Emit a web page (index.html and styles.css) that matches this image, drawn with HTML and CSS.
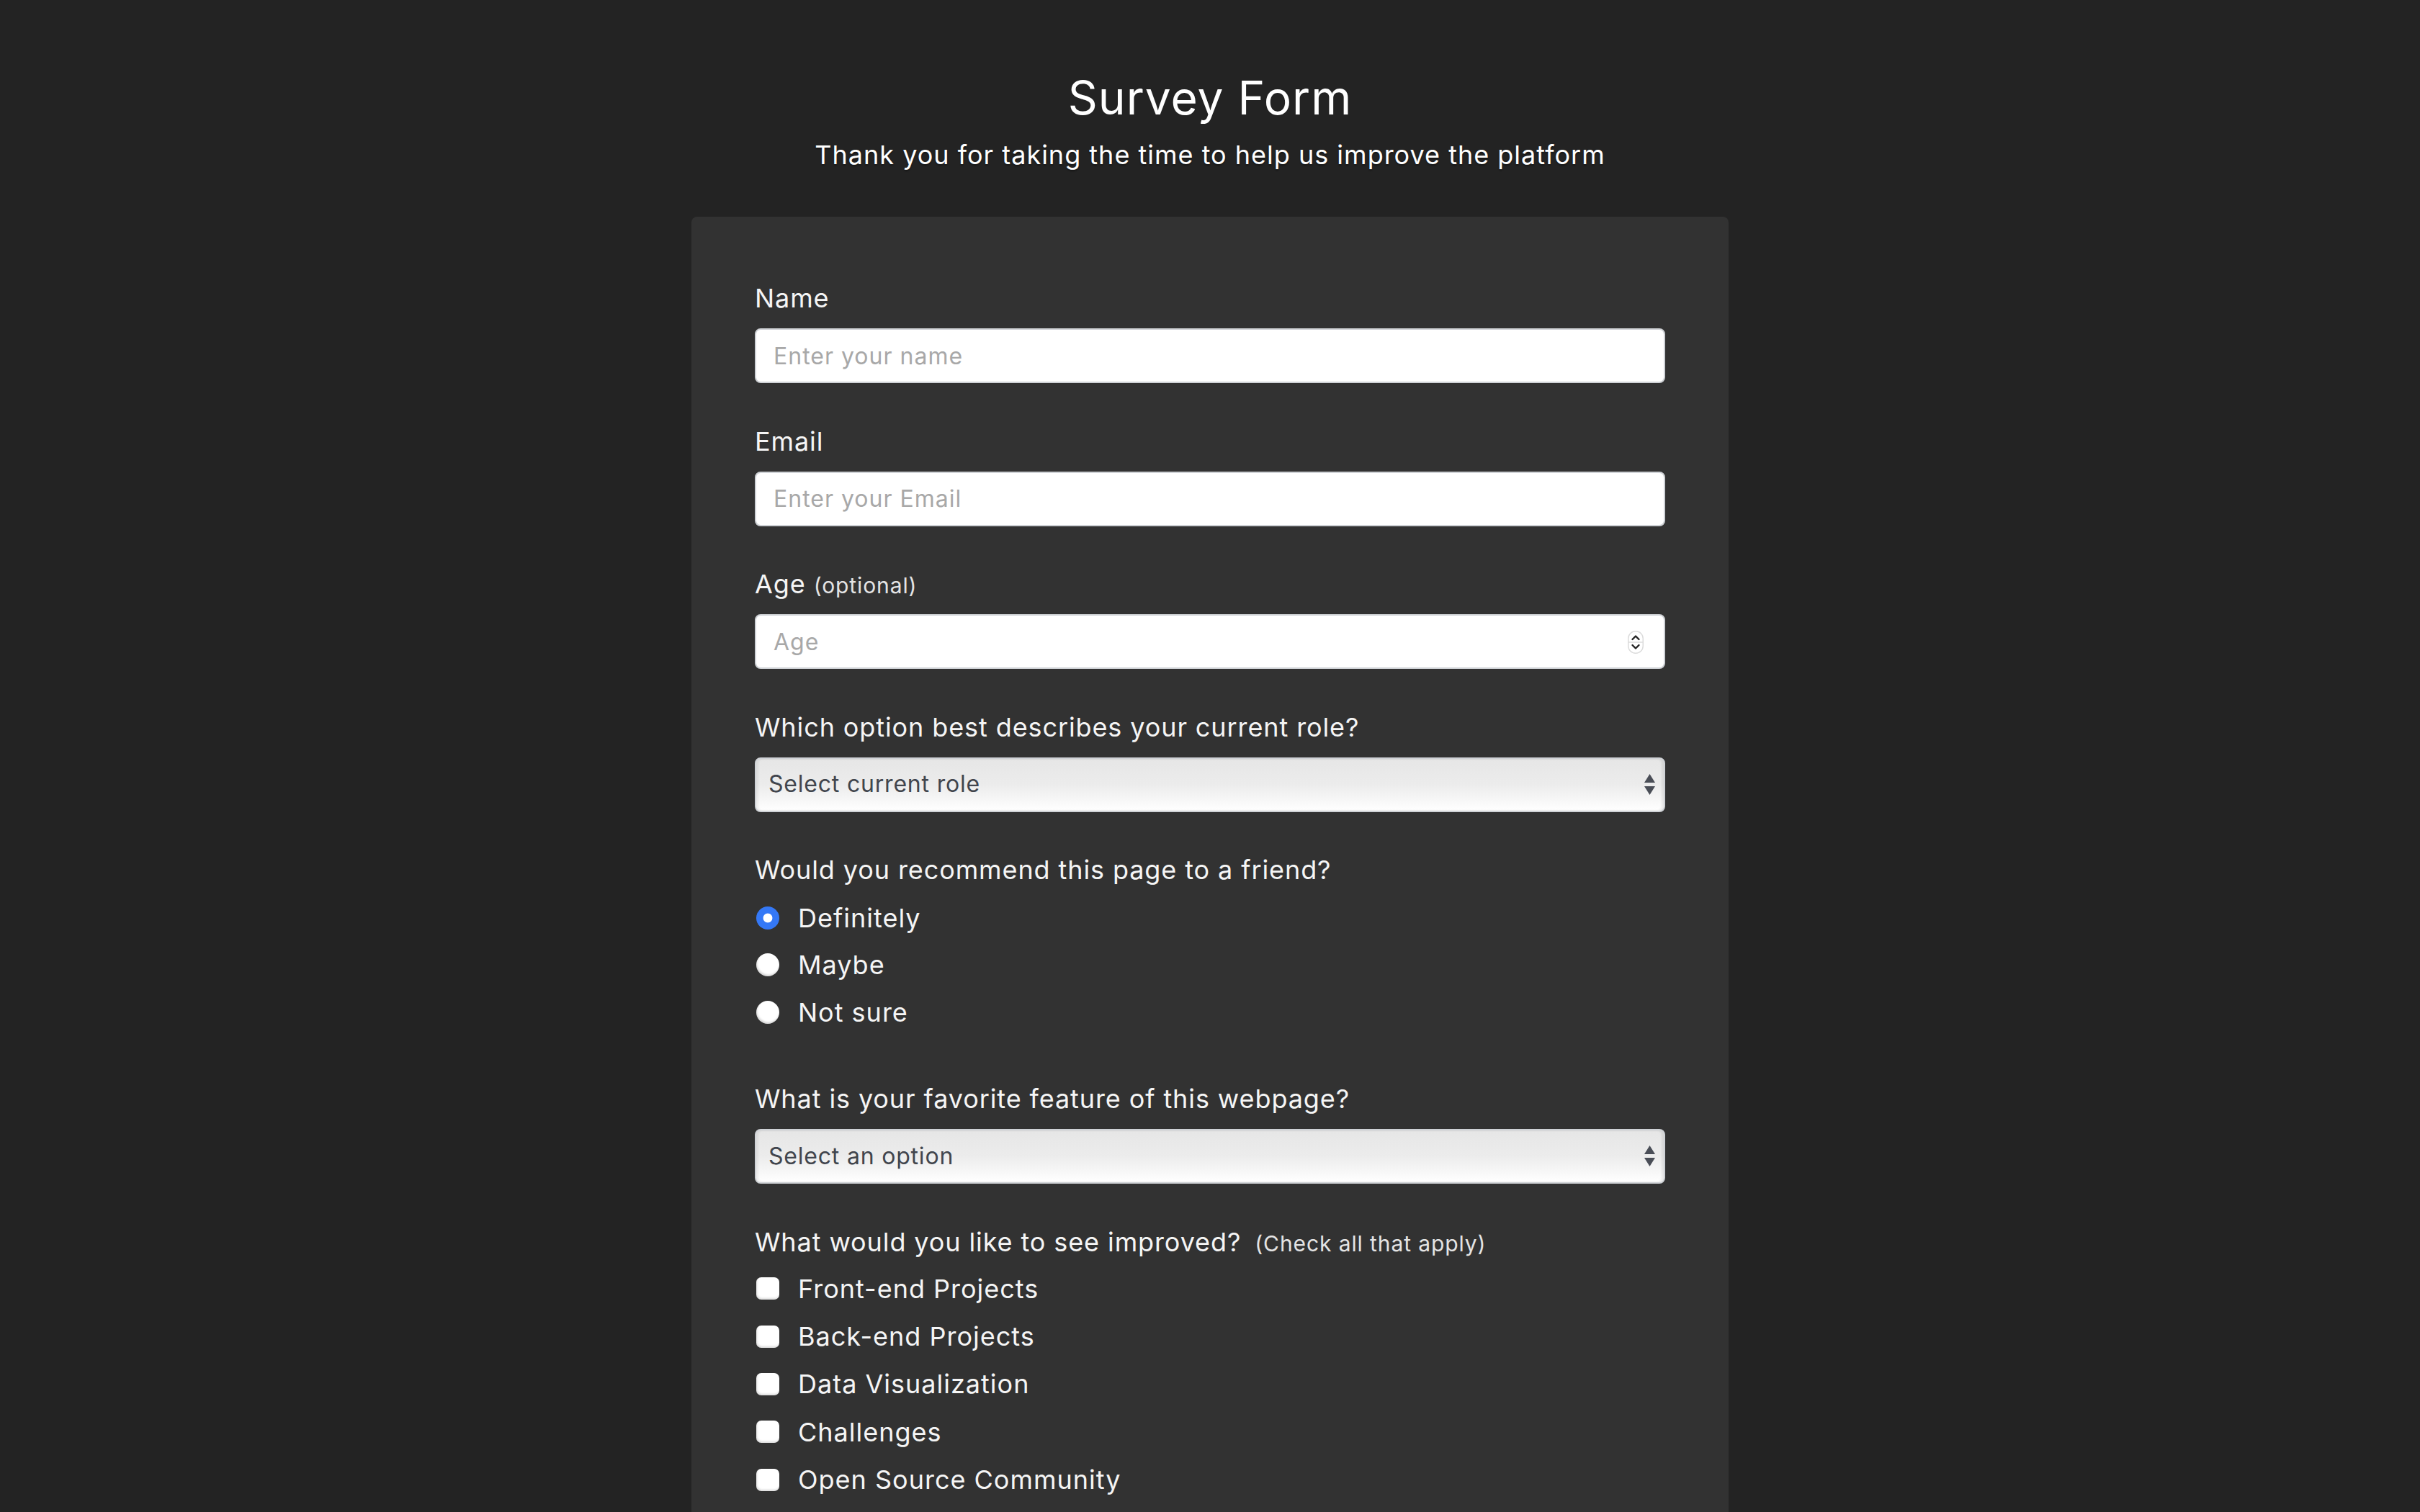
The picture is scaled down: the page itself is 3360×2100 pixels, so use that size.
FILE: index.html
```html
<!DOCTYPE html>
<html lang="en">
<head>
<meta charset="utf-8">
<title>Survey Form</title>
<link rel="stylesheet" href="styles.css">
</head>
<body>
<header class="header">
  <h1 class="title" id="title">Survey Form</h1>
  <p class="subtitle" id="description">Thank you for taking the time to help us improve the platform</p>
</header>
<form class="card" id="survey-form">
  <div class="group">
    <label class="label" for="name">Name</label>
    <input class="field" id="name" type="text" placeholder="Enter your name">
  </div>
  <div class="group">
    <label class="label" for="email">Email</label>
    <input class="field" id="email" type="email" placeholder="Enter your Email">
  </div>
  <div class="group">
    <label class="label" for="number">Age <span class="hint">(optional)</span></label>
    <div class="wrap">
      <input class="field" id="number" type="number" placeholder="Age">
      <svg class="spin" width="22" height="32" viewBox="0 0 22 32" aria-hidden="true">
        <rect x="0.75" y="0.75" width="20.5" height="30.5" rx="10" fill="#fff" stroke="#dcdcdc" stroke-width="1.5"/>
        <line x1="1" y1="16" x2="21" y2="16" stroke="#dcdcdc" stroke-width="1.5"/>
        <path d="M6.5 12 L11 7.5 L15.5 12" fill="none" stroke="#222" stroke-width="2.4" stroke-linecap="round" stroke-linejoin="round"/>
        <path d="M6.5 20 L11 24.5 L15.5 20" fill="none" stroke="#222" stroke-width="2.4" stroke-linecap="round" stroke-linejoin="round"/>
      </svg>
    </div>
  </div>
  <div class="group">
    <label class="label" for="dropdown">Which option best describes your current role?</label>
    <div class="wrap">
      <select class="select" id="dropdown">
        <option>Select current role</option>
        <option>Student</option>
        <option>Full Time Job</option>
        <option>Full Time Learner</option>
        <option>Prefer not to say</option>
        <option>Other</option>
      </select>
      <svg class="arrows" width="15" height="30" viewBox="0 0 15 30" aria-hidden="true">
        <path d="M7.5 0 L15 12 L0 12 Z" fill="#4a4e57"/>
        <path d="M0 17 L15 17 L7.5 29 Z" fill="#4a4e57"/>
      </svg>
    </div>
  </div>
  <div class="group group-radio">
    <span class="label">Would you recommend this page to a friend?</span>
    <div class="options">
      <label class="option"><input class="radio" type="radio" name="rec" checked> Definitely</label>
      <label class="option"><input class="radio" type="radio" name="rec"> Maybe</label>
      <label class="option"><input class="radio" type="radio" name="rec"> Not sure</label>
    </div>
  </div>
  <div class="group">
    <label class="label" for="feature">What is your favorite feature of this webpage?</label>
    <div class="wrap">
      <select class="select" id="feature">
        <option>Select an option</option>
        <option>Challenges</option>
        <option>Projects</option>
        <option>Community</option>
        <option>Open Source</option>
      </select>
      <svg class="arrows" width="15" height="30" viewBox="0 0 15 30" aria-hidden="true">
        <path d="M7.5 0 L15 12 L0 12 Z" fill="#4a4e57"/>
        <path d="M0 17 L15 17 L7.5 29 Z" fill="#4a4e57"/>
      </svg>
    </div>
  </div>
  <div class="group group-check">
    <span class="label">What would you like to see improved? <span class="hint hint-gap">(Check all that apply)</span></span>
    <div class="options">
      <label class="option option-check"><input class="check" type="checkbox"> Front-end Projects</label>
      <label class="option option-check"><input class="check" type="checkbox"> Back-end Projects</label>
      <label class="option option-check"><input class="check" type="checkbox"> Data Visualization</label>
      <label class="option option-check"><input class="check" type="checkbox"> Challenges</label>
      <label class="option option-check"><input class="check" type="checkbox"> Open Source Community</label>
    </div>
  </div>
</form>
</body>
</html>
```

FILE: styles.css
```css
* {
  box-sizing: border-box;
}

html,
body {
  margin: 0;
}

body {
  background: #232323;
  color: #f5f5f5;
  font-family: Inter, "Open Sans", "DejaVu Sans", sans-serif;
}

.header {
  text-align: center;
  padding-top: 98px;
}

.title {
  margin: 0;
  font-size: 64px;
  font-weight: 400;
  line-height: 76px;
  letter-spacing: 1px;
  color: #ffffff;
}

.subtitle {
  margin: 14px 0 0;
  font-size: 36px;
  line-height: 54px;
  letter-spacing: 1px;
  color: #ffffff;
  text-shadow: 0 2px 2px rgba(0, 0, 0, 0.35);
}

.card {
  width: 1440px;
  margin: 59px auto 0;
  background: #323232;
  border-radius: 8px;
  padding: 86px 88px 88px;
}

.group {
  display: flex;
  flex-direction: column;
  gap: 15px;
  margin-bottom: 53.5px;
}

.group-radio {
  gap: 7px;
  margin-bottom: 60.5px;
}

.group-check {
  gap: 5px;
}

.label {
  display: block;
  height: 54px;
  font-size: 36px;
  line-height: 54px;
  letter-spacing: 0.9px;
  color: #f5f5f5;
}

.hint {
  font-size: 30px;
  line-height: 1;
  letter-spacing: 0.9px;
  color: #e4e4e4;
}

.hint-gap {
  margin-left: 8px;
}

.wrap {
  position: relative;
}

.field {
  display: block;
  width: 100%;
  height: 76px;
  margin: 0;
  border: 2px solid #cfd2d6;
  border-radius: 8px;
  background: #ffffff;
  padding: 0 24px;
  font-family: inherit;
  font-size: 32px;
  letter-spacing: 1px;
  color: #333333;
  outline: none;
}

.field::placeholder {
  color: #a8a8a8;
}

.field::-webkit-inner-spin-button,
.field::-webkit-outer-spin-button {
  -webkit-appearance: none;
  margin: 0;
}

.spin {
  position: absolute;
  right: 30px;
  top: 23px;
  pointer-events: none;
}

.select {
  display: block;
  width: 100%;
  height: 76px;
  margin: 0;
  -webkit-appearance: none;
  appearance: none;
  border: 2px solid #cfd2d6;
  border-radius: 8px;
  background: linear-gradient(to bottom, #e6e6e6 0%, #ececec 50%, #ffffff 100%);
  box-shadow: inset 3px 0 3px rgba(0, 0, 0, 0.06), inset -3px 0 3px rgba(0, 0, 0, 0.08);
  padding: 0 50px 2px 17px;
  font-family: inherit;
  font-size: 32px;
  letter-spacing: 0.8px;
  color: #41454d;
  outline: none;
}

.arrows {
  position: absolute;
  right: 14px;
  top: 23px;
  pointer-events: none;
}

.options {
  display: flex;
  flex-direction: column;
}

.option {
  display: flex;
  align-items: center;
  gap: 26px;
  height: 65.5px;
  font-size: 36px;
  letter-spacing: 1px;
  color: #f5f5f5;
}

.option-check {
  height: 66.4px;
}

.radio {
  -webkit-appearance: none;
  appearance: none;
  flex: none;
  margin: 0 0 0 2px;
  width: 32px;
  height: 32px;
  border-radius: 50%;
  background: #ffffff;
  box-shadow: inset 1px -2px 3px rgba(0, 0, 0, 0.18);
}

.radio:checked {
  background: radial-gradient(circle, #ffffff 0 6px, #3478f6 6.8px);
  box-shadow: none;
}

.check {
  -webkit-appearance: none;
  appearance: none;
  flex: none;
  margin: 0 0 0 2px;
  width: 32px;
  height: 31px;
  border-radius: 7px;
  background: #ffffff;
  box-shadow: inset 1px -2px 3px rgba(0, 0, 0, 0.15);
}
```
